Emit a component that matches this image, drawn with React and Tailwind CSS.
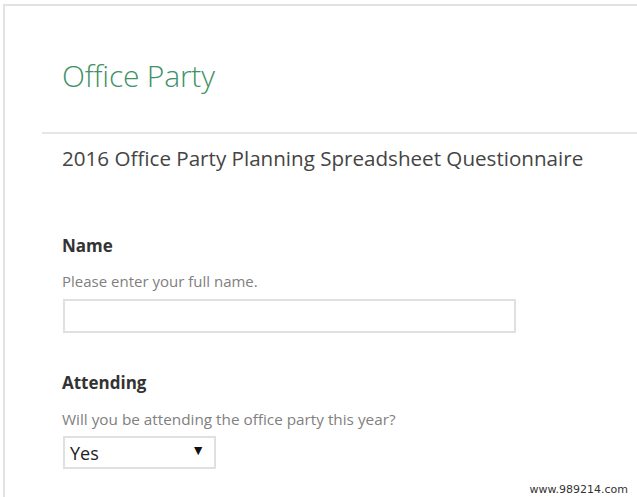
export default function App() {
  return (
    <div className="w-[637px] h-[497px] bg-white overflow-hidden relative" style={{ fontFamily: '"Open Sans", "Noto Sans", sans-serif' }}>
      <div className="ml-[3px] mt-[4px] h-[493px] border-l-2 border-t-2 border-[#e2e2e2]">
        <div className="pl-[57px] pt-[50px]">
          <h1 className="text-[30px] font-light text-[#3f9268] leading-[40px] tracking-[-0.2px]">Office Party</h1>
        </div>
        <div className="ml-[37px] mt-[36px] border-t-2 border-[#e6e6e6]" />
        <div className="pl-[57px]">
          <h2 className="mt-[10px] text-[20.6px] text-[#444] leading-[28px]">2016 Office Party Planning Spreadsheet Questionnaire</h2>

          <div className="mt-[63px]">
            <div className="text-[17px] font-bold text-[#333] leading-[22px]">Name</div>
            <div className="mt-[14px] text-[15px] text-[#808080] leading-[20px]">Please enter your full name.</div>
            <div className="mt-[8px] ml-[1px] w-[453px] h-[34px] border-2 border-[#e0e0e0] bg-white" />
          </div>

          <div className="mt-[39px]">
            <div className="text-[17px] font-bold text-[#333] leading-[22px]">Attending</div>
            <div className="mt-[15px] text-[15.3px] text-[#808080] leading-[20px]">Will you be attending the office party this year?</div>
            <div className="mt-[7px] ml-[1px] w-[153px] h-[33px] border-2 border-[#e0e0e0] bg-white flex items-center justify-between pl-[5px] pr-[9px]">
              <span className="text-[18px] text-[#222] leading-none">Yes</span>
              <span className="text-[14px] text-[#111] leading-none mb-[5px]">▼</span>
            </div>
          </div>
        </div>
      </div>
      <div className="absolute right-[9px] bottom-[2px] text-[11px] text-[#333] leading-none" style={{ fontFamily: '"DejaVu Sans", sans-serif' }}>www.989214.com</div>
    </div>
  );
}
